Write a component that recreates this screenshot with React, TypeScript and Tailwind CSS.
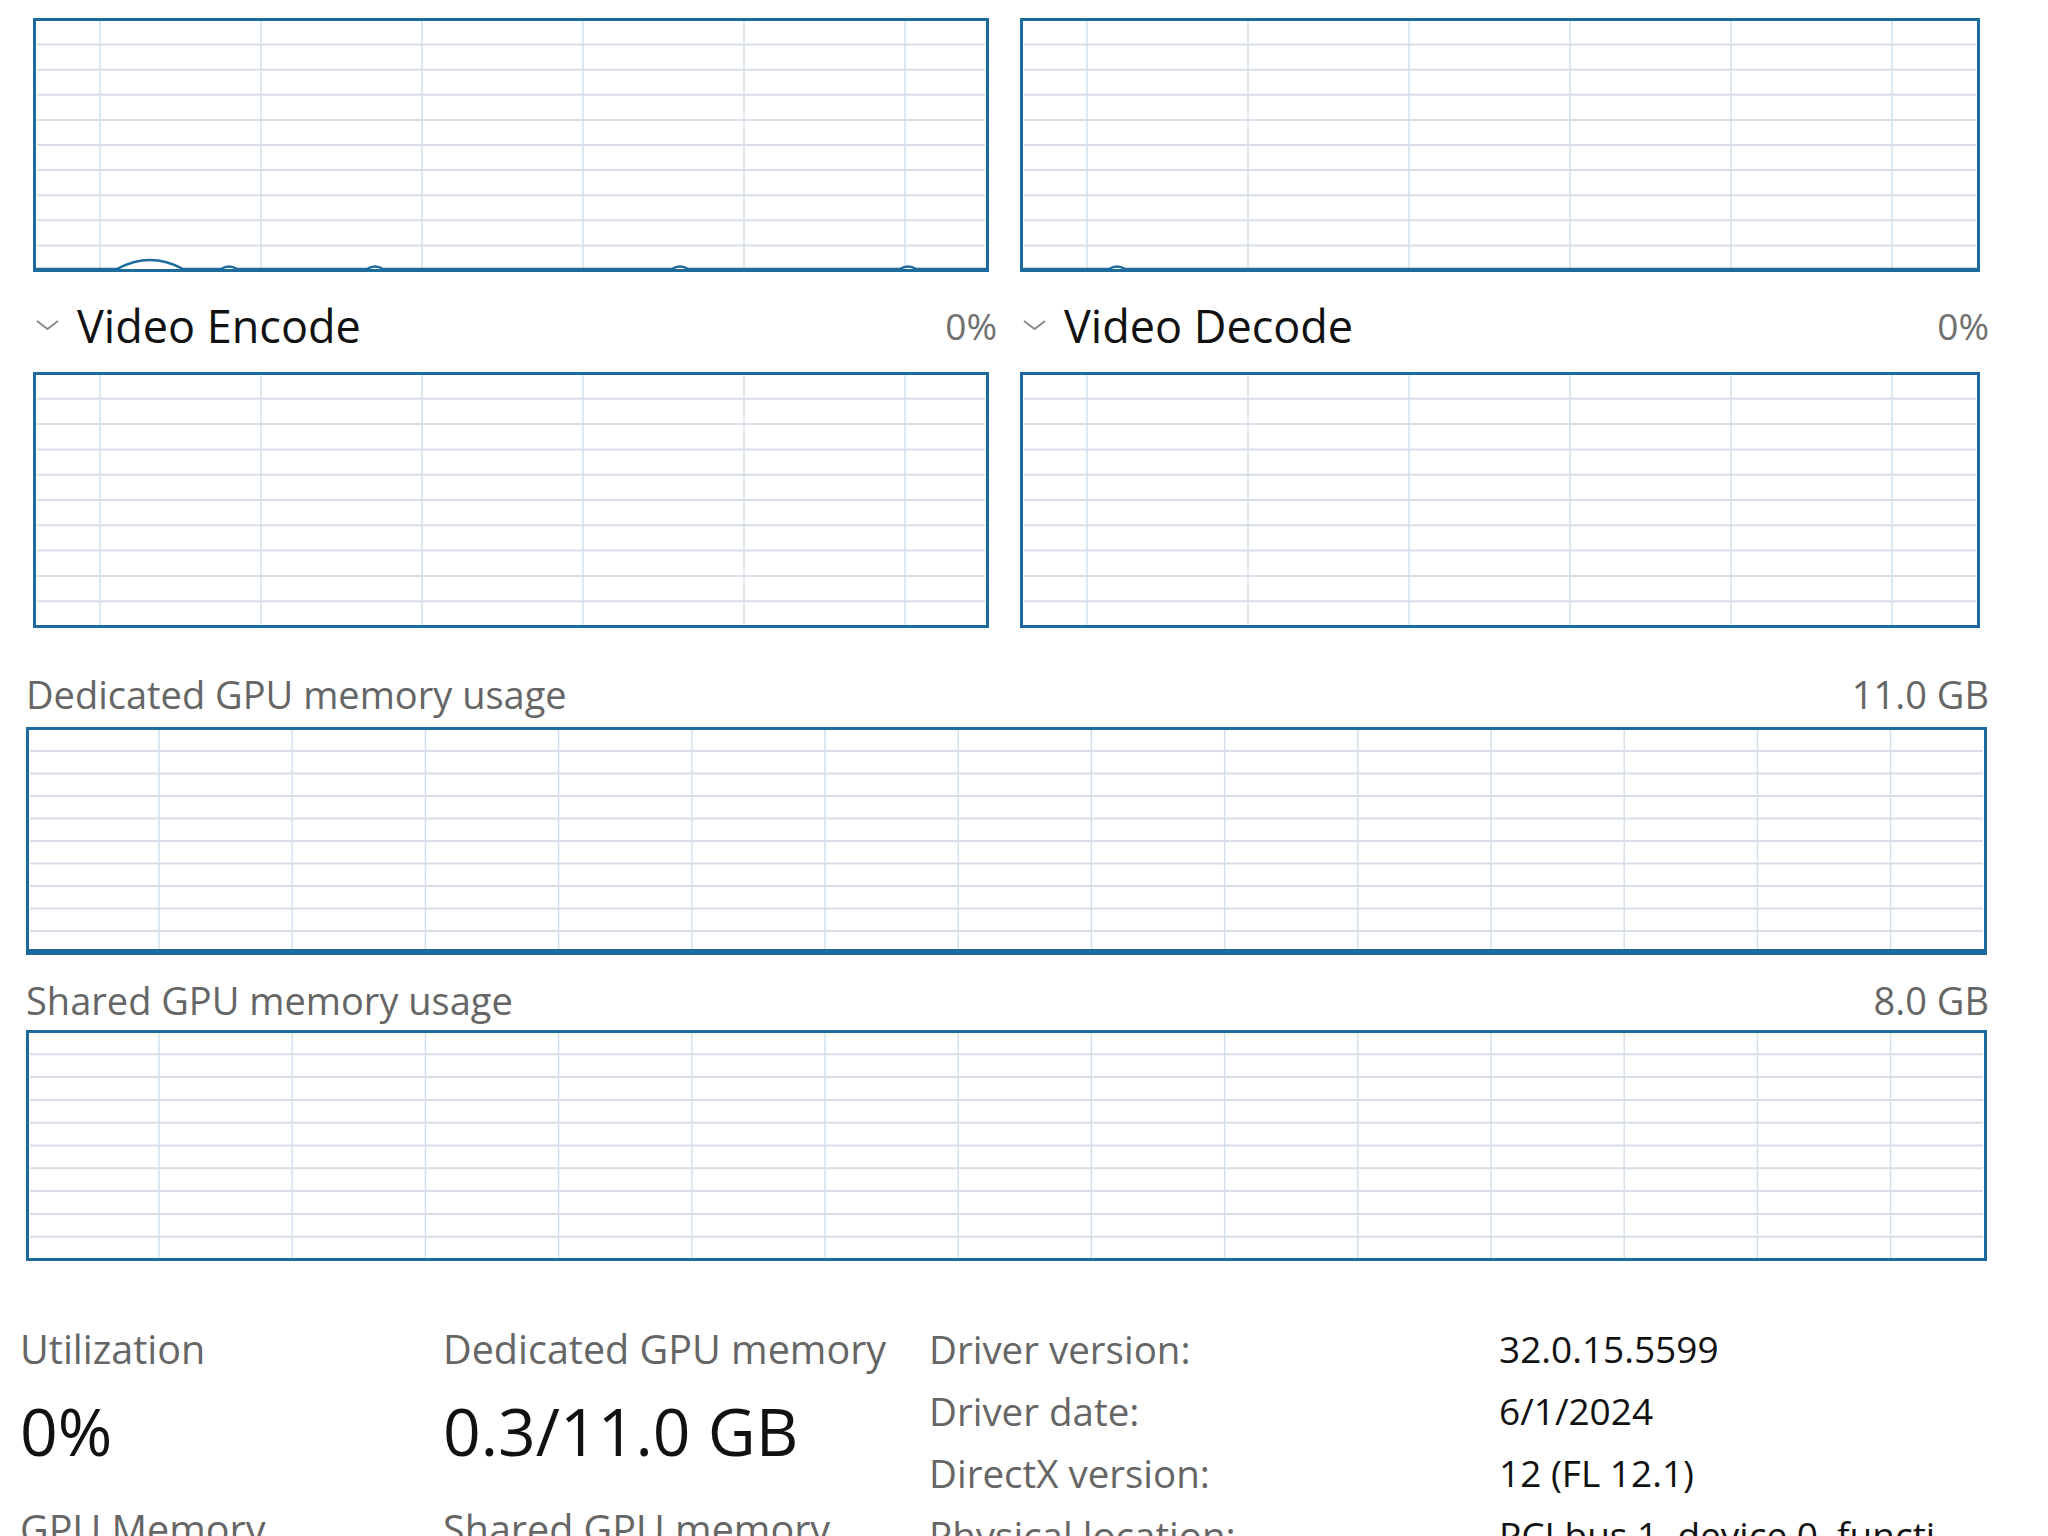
import React from 'react'

const BORDER = '#1d6a9c'
const HGRID = '#d7dee7'
const VGRID = '#d3e0eb'

type GraphProps = {
  w: number
  h: number
  step: number
  start: number
  line?: string
  usage?: number
}

function Graph({ w, h, step, start, line, usage }: GraphProps) {
  const rows = Array.from({ length: 9 }, (_, i) => 1.5 + ((h - 3) * (i + 1)) / 10)
  const cols: number[] = []
  for (let x = start; x < w - 4; x += step) cols.push(x)
  return (
    <svg width={w} height={h} viewBox={`0 0 ${w} ${h}`} className="block">
      <rect x={0} y={0} width={w} height={h} fill="#ffffff" />
      {rows.map((y) => (
        <line key={'h' + y} x1={4} x2={w - 4} y1={y} y2={y} stroke={HGRID} strokeWidth={2} />
      ))}
      {cols.map((x) => (
        <line key={'v' + x} x1={x} x2={x} y1={3} y2={h - 3} stroke={VGRID} strokeWidth={1.5} />
      ))}
      {usage ? <rect x={2} y={h - 3 - usage} width={w - 4} height={usage} fill={BORDER} /> : null}
      {line ? <path d={line} fill="none" stroke={BORDER} strokeWidth={2.5} /> : null}
      <rect x={1.5} y={1.5} width={w - 3} height={h - 3} fill="none" stroke={BORDER} strokeWidth={3} />
    </svg>
  )
}

function Chevron() {
  return (
    <svg width="25" height="12" viewBox="0 0 25 12" className="shrink-0">
      <polyline points="2,2 12.5,10 23,2" fill="none" stroke="#8a8a8a" strokeWidth="2" />
    </svg>
  )
}

function Header({ title, value }: { title: string; value: string }) {
  return (
    <div className="h-[100px] pt-[6px] flex items-center">
      <div className="ml-[2px] mr-[17px] flex items-center">
        <Chevron />
      </div>
      <span className="text-[45px] leading-none text-[#111]">{title}</span>
      <span className="ml-auto text-[37px] leading-none text-[#707070]">{value}</span>
    </div>
  )
}

const b1 = 251
const leftTopLine = `M3 ${b1} L84 ${b1} Q117 ${b1 - 18} 150 ${b1} L188 ${b1} Q196 ${b1 - 5} 204 ${b1} L334 ${b1} Q342 ${b1 - 5} 350 ${b1} L639 ${b1} Q647 ${b1 - 5} 655 ${b1} L867 ${b1} Q875 ${b1 - 5} 883 ${b1} L953 ${b1}`
const rightTopLine = `M3 ${b1} L89 ${b1} Q97 ${b1 - 5} 105 ${b1} L957 ${b1}`

export default function App() {
  return (
    <div
      className="w-[2048px] h-[1536px] overflow-hidden bg-white"
      style={{ fontFamily: '"Open Sans", "Noto Sans", sans-serif' }}
    >
      <div className="mt-[-82px] flex pl-[33px] gap-[23px]">
        <div className="w-[964px] flex flex-col">
          <Header title="3D" value="0%" />
          <Graph w={956} h={254} step={161} start={67} line={leftTopLine} />
          <Header title="Video Encode" value="0%" />
          <Graph w={956} h={256} step={161} start={67} />
        </div>
        <div className="w-[969px] flex flex-col">
          <Header title="Copy" value="0%" />
          <Graph w={960} h={254} step={161} start={67} line={rightTopLine} />
          <Header title="Video Decode" value="0%" />
          <Graph w={960} h={256} step={161} start={67} />
        </div>
      </div>

      <div className="pl-[26px] w-[1989px] flex flex-col">
        <div className="h-[99px] pt-[33px] flex items-center text-[38px] leading-none text-[#666]">
          <span>Dedicated GPU memory usage</span>
          <span className="ml-auto">11.0 GB</span>
        </div>
        <Graph w={1961} h={228} step={133.2} start={133} usage={3} />
        <div className="h-[75px] pt-[15px] flex items-center text-[38px] leading-none text-[#666]">
          <span>Shared GPU memory usage</span>
          <span className="ml-auto">8.0 GB</span>
        </div>
        <Graph w={1961} h={231} step={133.2} start={133} />
      </div>

      <div className="mt-[57px] flex text-[37px]">
        <div className="w-[443px] pl-[20px] flex flex-col">
          <div className="h-[62px] leading-[62px] text-[39.5px] text-[#666]">Utilization</div>
          <div className="mt-[5px] h-[90px] leading-[90px] text-[66px] text-[#111]">0%</div>
          <div className="mt-[23px] h-[62px] leading-[62px] text-[39.5px] text-[#666]">GPU Memory</div>
        </div>
        <div className="w-[486px] flex flex-col">
          <div className="h-[62px] leading-[62px] text-[39.5px] text-[#666] whitespace-nowrap">Dedicated GPU memory</div>
          <div className="mt-[5px] h-[90px] leading-[90px] text-[66px] text-[#111] whitespace-nowrap">0.3/11.0 GB</div>
          <div className="mt-[23px] h-[62px] leading-[62px] text-[39.5px] text-[#666] whitespace-nowrap">Shared GPU memory</div>
        </div>
        <div className="flex flex-col">
          {[
            ['Driver version:', '32.0.15.5599'],
            ['Driver date:', '6/1/2024'],
            ['DirectX version:', '12 (FL 12.1)'],
            ['Physical location:', 'PCI bus 1, device 0, function 0'],
          ].map(([k, v]) => (
            <div key={k} className="h-[62px] leading-[62px] flex">
              <span className="w-[570px] text-[38.5px] text-[#666] whitespace-nowrap">{k}</span>
              <span className="w-[470px] text-[#111] whitespace-nowrap overflow-hidden text-ellipsis">{v}</span>
            </div>
          ))}
        </div>
      </div>
    </div>
  )
}
